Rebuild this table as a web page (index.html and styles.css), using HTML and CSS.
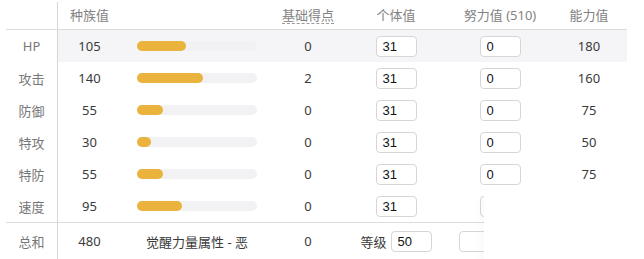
FILE: index.html
```html
<!DOCTYPE html>
<html lang="zh">
<head>
<meta charset="utf-8">
<link rel="stylesheet" href="styles.css">
</head>
<body>
<div class="page">
  <div class="table">
    <div class="row head">
      <div class="c name"></div>
      <div class="c">种族值</div>
      <div class="c"></div>
      <div class="c"><span class="dash">基础得点</span></div>
      <div class="c">个体值</div>
      <div class="c">努力值 (510)</div>
      <div class="c">能力值</div>
    </div>
    <div class="row hl">
      <div class="c name">HP</div>
      <div class="c val">105</div>
      <div class="c"><div class="track"><div class="fill" style="width:49px"></div></div></div>
      <div class="c val">0</div>
      <div class="c"><input class="inp" value="31"></div>
      <div class="c"><input class="inp" value="0"></div>
      <div class="c val">180</div>
    </div>
    <div class="row">
      <div class="c name">攻击</div>
      <div class="c val">140</div>
      <div class="c"><div class="track"><div class="fill" style="width:66px"></div></div></div>
      <div class="c val">2</div>
      <div class="c"><input class="inp" value="31"></div>
      <div class="c"><input class="inp" value="0"></div>
      <div class="c val">160</div>
    </div>
    <div class="row">
      <div class="c name">防御</div>
      <div class="c val">55</div>
      <div class="c"><div class="track"><div class="fill" style="width:26px"></div></div></div>
      <div class="c val">0</div>
      <div class="c"><input class="inp" value="31"></div>
      <div class="c"><input class="inp" value="0"></div>
      <div class="c val">75</div>
    </div>
    <div class="row">
      <div class="c name">特攻</div>
      <div class="c val">30</div>
      <div class="c"><div class="track"><div class="fill" style="width:14px"></div></div></div>
      <div class="c val">0</div>
      <div class="c"><input class="inp" value="31"></div>
      <div class="c"><input class="inp" value="0"></div>
      <div class="c val">50</div>
    </div>
    <div class="row">
      <div class="c name">特防</div>
      <div class="c val">55</div>
      <div class="c"><div class="track"><div class="fill" style="width:26px"></div></div></div>
      <div class="c val">0</div>
      <div class="c"><input class="inp" value="31"></div>
      <div class="c"><input class="inp" value="0"></div>
      <div class="c val">75</div>
    </div>
    <div class="row last">
      <div class="c name">速度</div>
      <div class="c val">95</div>
      <div class="c"><div class="track"><div class="fill" style="width:45px"></div></div></div>
      <div class="c val">0</div>
      <div class="c"><input class="inp" value="31"></div>
      <div class="c"><input class="inp" value="0"></div>
      <div class="c val">115</div>
    </div>
    <div class="row total">
      <div class="c name">总和</div>
      <div class="c val">480</div>
      <div class="c val">觉醒力量属性 - 恶</div>
      <div class="c val">0</div>
      <div class="c val level"><span>等级</span><input class="inp" value="50"></div>
      <div class="c"><input class="inp wide" value=""></div>
      <div class="c val"></div>
    </div>
  </div>
  <div class="ghost"></div>
</div>
</body>
</html>
```

FILE: styles.css
```css
html, body {
  margin: 0;
  padding: 0;
  background: #ffffff;
}
body {
  font-family: "Noto Sans", "Noto Sans CJK SC", sans-serif;
  font-size: 13px;
  color: #3a3a3a;
}
.page {
  position: relative;
  width: 644px;
  height: 259px;
  overflow: hidden;
  padding: 2px 0 0 6px;
  box-sizing: border-box;
}
.table {
  width: 621px;
  display: flex;
  flex-direction: column;
}
.row {
  display: grid;
  grid-template-columns: 52px 63px 152px 70px 106px 102px 76px;
  height: 32px;
}
.row.head {
  height: 27px;
  border-bottom: 1px solid #dcdcdf;
  color: #828282;
}
.row.head .c {
  padding-bottom: 3px;
}
.row.hl .c:not(.name) {
  background: #f5f5f7;
}
.row.last {
  border-bottom: 1px solid #dcdcdf;
}
.row.total {
  height: 36px;
}
.c {
  display: flex;
  align-items: center;
  justify-content: center;
  box-sizing: border-box;
}
.c.name {
  color: #777777;
  border-right: 1px solid #d6d6d9;
}
.c.val {
  color: #3a3a3a;
}
.dash {
  border-bottom: 1px dashed #9a9a9a;
  line-height: 16px;
  margin-top: 2px;
}
.track {
  width: 120px;
  height: 10px;
  border-radius: 5px;
  background: #f2f2f4;
  display: flex;
}
.fill {
  height: 10px;
  border-radius: 5px;
  background: #eab33d;
}
.inp {
  width: 41px;
  height: 21px;
  box-sizing: border-box;
  border: 1px solid #d6d6d9;
  border-radius: 4px;
  padding: 0 0 0 6px;
  font-family: "Liberation Sans", Arial, sans-serif;
  font-size: 13px;
  color: #111;
  background: #fff;
  outline: none;
}
.inp.wide {
  width: 82px;
}
.level {
  gap: 4px;
}
.ghost {
  position: absolute;
  left: 484px;
  top: 190px;
  width: 170px;
  height: 80px;
  background: #ffffff;
  box-shadow: -2px 6px 10px rgba(0, 0, 0, 0.03);
}
```
